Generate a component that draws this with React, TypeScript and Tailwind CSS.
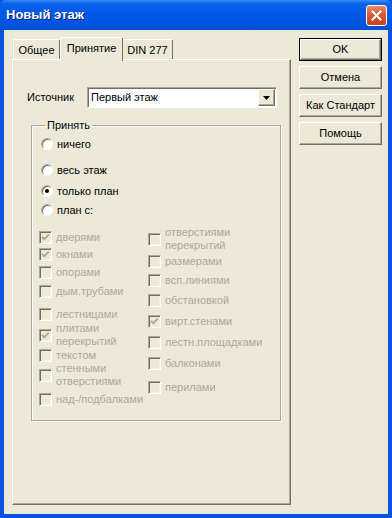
import React from 'react'

const font = "font-['Liberation_Sans',Arial,sans-serif]"

function Radio({ label, checked, className = '' }: { label: string; checked?: boolean; className?: string }) {
  return (
    <div className={`flex items-center h-[14px] ${className}`}>
      <div className="ml-[2px] w-[12px] h-[12px] rounded-full border border-t-[#aca899] border-l-[#aca899] border-r-white border-b-white bg-white shadow-[inset_1px_1px_0_#716f64] flex items-center justify-center">
        {checked && <div className="w-[4px] h-[4px] rounded-full bg-black" />}
      </div>
      <span className="ml-[4px] text-black">{label}</span>
    </div>
  )
}

function Check({ label, checked, className = '' }: { label: React.ReactNode; checked?: boolean; className?: string }) {
  return (
    <div className={`flex items-center ${className}`}>
      <div className="w-[13px] h-[13px] shrink-0 border border-t-[#aca899] border-l-[#aca899] border-r-white border-b-white bg-[#ece9d8] shadow-[inset_1px_1px_0_#716f64,inset_-1px_-1px_0_#f1efe2] flex items-center justify-center">
        {checked && (
          <svg width="11" height="11" viewBox="0 0 11 11">
            <path d="M2 4.8 L4.3 7.2 L8.8 2.6" fill="none" stroke="#aca899" strokeWidth="1.9" />
          </svg>
        )}
      </div>
      <span className="ml-[4px] text-[#aca899] leading-[13px]">{label}</span>
    </div>
  )
}

function Btn({ children, isDefault }: { children: React.ReactNode; isDefault?: boolean }) {
  return (
    <div className={`w-[83px] h-[23px] ${isDefault ? 'border border-black' : ''}`}>
      <div className="w-full h-full bg-[#ece9d8] border border-t-white border-l-white border-r-[#716f64] border-b-[#716f64] shadow-[inset_-1px_-1px_0_#aca899] flex items-center justify-center text-black">
        {children}
      </div>
    </div>
  )
}

export default function App() {
  const col1 = [
    { l: 'дверями', c: true, h: 'h-[14px]', m: '' },
    { l: 'окнами', c: true, h: 'h-[14px]', m: 'mt-[3px]' },
    { l: 'опорами', h: 'h-[14px]', m: 'mt-[4px]' },
    { l: 'дым.трубами', h: 'h-[14px]', m: 'mt-[5px]' },
    { l: 'лестницами', h: 'h-[14px]', m: 'mt-[9px]' },
    { l: <>плитами<br />перекрытий</>, c: true, h: 'h-[26px]', m: 'mt-[1px]' },
    { l: 'текстом', h: 'h-[14px]', m: '' },
    { l: <>стенными<br />отверстиями</>, h: 'h-[26px]', m: '' },
    { l: 'над-/подбалками', h: 'h-[14px]', m: 'mt-[4px]' },
  ]
  const col2 = [
    { l: <>отверстиями<br />перекрытий</>, h: 'h-[26px]', m: '' },
    { l: 'размерами', h: 'h-[14px]', m: 'mt-[2px]' },
    { l: 'всп.линиями', h: 'h-[14px]', m: 'mt-[5px]' },
    { l: 'обстановкой', h: 'h-[14px]', m: 'mt-[6px]' },
    { l: 'вирт.стенами', c: true, h: 'h-[14px]', m: 'mt-[7px]' },
    { l: 'лестн.площадками', h: 'h-[14px]', m: 'mt-[7px]' },
    { l: 'балконами', h: 'h-[14px]', m: 'mt-[7px]' },
    { l: 'перилами', h: 'h-[14px]', m: 'mt-[10px]' },
  ]

  return (
    <div className={`w-[392px] h-[518px] bg-[#0754e0] flex flex-col text-[11px] ${font}`}>
      {/* title bar */}
      <div className="h-[30px] shrink-0 flex items-center pl-[6px] pr-[5px] rounded-t-[6px] bg-[linear-gradient(180deg,#3d8cf5_0%,#0a64ec_12%,#0058e6_45%,#0256e2_70%,#004fd6_100%)]">
        <span className="text-white font-bold text-[13px] [text-shadow:1px_1px_0_#0a1f6a]">Новый этаж</span>
        <div className="ml-auto w-[21px] h-[21px] rounded-[3px] border border-white bg-[linear-gradient(180deg,#eb8a6d_0%,#d95a36_45%,#c8421c_100%)] flex items-center justify-center">
          <svg width="11" height="11" viewBox="0 0 11 11">
            <path d="M1.5 1.5 L9.5 9.5 M9.5 1.5 L1.5 9.5" stroke="white" strokeWidth="2" strokeLinecap="square" />
          </svg>
        </div>
      </div>

      {/* body */}
      <div className="flex-1 mx-[4px] mb-[4px] bg-[#ece9d8] flex pt-[7px] pl-[8px]">
        <div className="w-[279px] flex flex-col">
          {/* tabs */}
          <div className="flex items-end h-[22px] pl-[1px]">
            <div className="w-[47px] h-[20px] border border-b-0 border-t-white border-l-white border-r-[#716f64] rounded-t-[2px] flex items-center justify-center pt-[2px] text-black">
              Общее
            </div>
            <div className="relative z-10 w-[63px] h-[24px] -mb-[2px] bg-[#ece9d8] border border-b-0 border-t-white border-l-white border-r-[#716f64] rounded-t-[2px] flex items-center justify-center pb-[3px] text-black">
              Принятие
            </div>
            <div className="w-[50px] h-[20px] border border-b-0 border-t-white border-l-0 border-r-[#716f64] rounded-t-[2px] flex items-center justify-center pt-[2px] text-black">
              DIN 277
            </div>
          </div>

          {/* panel */}
          <div className="h-[446px] border border-t-white border-l-white border-r-[#716f64] border-b-[#716f64] shadow-[inset_-1px_-1px_0_#aca899] pt-[27px] pl-[14px]">
            <div className="flex items-center h-[21px]">
              <span className="w-[60px] text-black">Источник</span>
              <div className="w-[190px] h-[21px] bg-white border border-t-[#aca899] border-l-[#aca899] border-r-white border-b-white shadow-[inset_1px_1px_0_#716f64] flex items-center">
                <span className="pl-[3px] text-black">Первый этаж</span>
                <div className="ml-auto mr-[1px] w-[17px] h-[17px] bg-[#ece9d8] border border-t-white border-l-white border-r-[#716f64] border-b-[#716f64] shadow-[inset_-1px_-1px_0_#aca899] flex items-center justify-center">
                  <svg width="7" height="4" viewBox="0 0 7 4">
                    <path d="M0 0 H7 L3.5 4 Z" fill="black" />
                  </svg>
                </div>
              </div>
            </div>

            <fieldset className="ml-[4px] mt-[11px] w-[250px] h-[302px] border border-[#aca899] shadow-[1px_1px_0_#fff,inset_1px_1px_0_#fff] pl-[7px]">
              <legend className="ml-[6px] px-[2px] text-black leading-[13px]">Принять</legend>
              <Radio label="ничего" className="mt-[5px]" />
              <Radio label="весь этаж" className="mt-[12px]" />
              <Radio label="только план" checked className="mt-[7px]" />
              <Radio label="план с:" className="mt-[5px]" />

              <div className="flex items-start mt-[9px]">
                <div className="w-[109px] flex flex-col pt-[4px]">
                  {col1.map((it, i) => (
                    <Check key={i} label={it.l} checked={it.c} className={`${it.h} ${it.m}`} />
                  ))}
                </div>
                <div className="flex flex-col">
                  {col2.map((it, i) => (
                    <Check key={i} label={it.l} checked={it.c} className={`${it.h} ${it.m}`} />
                  ))}
                </div>
              </div>
            </fieldset>
          </div>
        </div>

        {/* buttons */}
        <div className="ml-[8px] pt-[1px] flex flex-col gap-[5px]">
          <Btn isDefault>OK</Btn>
          <Btn>Отмена</Btn>
          <Btn>Как Стандарт</Btn>
          <Btn>Помощь</Btn>
        </div>
      </div>
    </div>
  )
}
